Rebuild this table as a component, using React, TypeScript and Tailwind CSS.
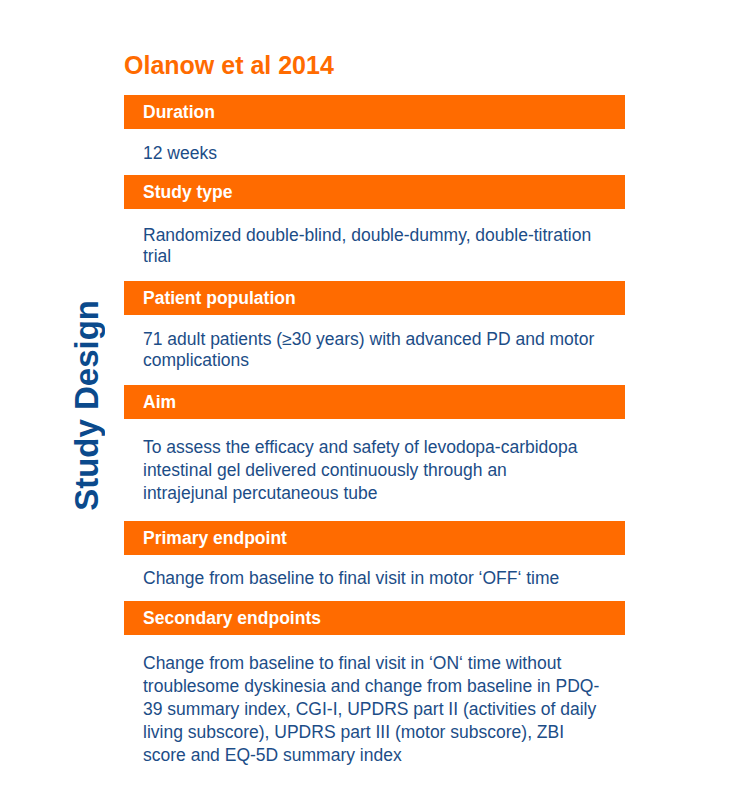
const sections = [
  { title: 'Duration', lines: ['12 weeks'], pad: 'pt-[13px] pb-[10px] leading-[23px]' },
  {
    title: 'Study type',
    lines: ['Randomized double-blind, double-dummy, double-titration', 'trial'],
    pad: 'pt-[16px] pb-[14px] leading-[21px]',
  },
  {
    title: 'Patient population',
    lines: ['71 adult patients (≥30 years) with advanced PD and motor', 'complications'],
    pad: 'pt-[14px] pb-[14px] leading-[21px]',
  },
  {
    title: 'Aim',
    lines: [
      'To assess the efficacy and safety of levodopa-carbidopa',
      'intestinal gel delivered continuously through an',
      'intrajejunal percutaneous tube',
    ],
    pad: 'pt-[17px] pb-[16px] leading-[23px]',
  },
  {
    title: 'Primary endpoint',
    lines: ['Change from baseline to final visit in motor ‘OFF‘ time'],
    pad: 'pt-[12px] pb-[11px] leading-[23px]',
  },
  {
    title: 'Secondary endpoints',
    lines: [
      'Change from baseline to final visit in ‘ON‘ time without',
      'troublesome dyskinesia and change from baseline in PDQ-',
      '39 summary index, CGI-I, UPDRS part II (activities of daily',
      'living subscore), UPDRS part III (motor subscore), ZBI',
      'score and EQ-5D summary index',
    ],
    pad: 'pt-[17px] pb-[16px] leading-[23px]',
  },
]

export default function App() {
  return (
    <div className="min-h-[809px] w-[730px] bg-white font-['Liberation_Sans',Arial,sans-serif]">
      <div className="flex pt-[51px]">
        {/* vertical label */}
        <div className="flex w-[124px] flex-col items-center justify-center pb-[24px] pl-[48px]">
          <h2 className="rotate-180 text-[33px] font-bold leading-none text-[#0b4a8c] [writing-mode:vertical-rl]">
            Study Design
          </h2>
        </div>

        <div className="w-[501px]">
          <h1 className="mb-[16px] text-[25px] font-bold leading-[28px] text-[#ff6b00]">
            Olanow et al 2014
          </h1>
          {sections.map((s) => (
            <div key={s.title}>
              <div className="flex h-[34px] items-center bg-[#ff6b00] px-[19px] text-[17.5px] font-bold text-white">
                {s.title}
              </div>
              <p className={`whitespace-nowrap px-[19px] text-[17.5px] text-[#1c4d87] ${s.pad}`}>
                {s.lines.map((l, i) => (
                  <span key={i} className="block">
                    {l}
                  </span>
                ))}
              </p>
            </div>
          ))}
        </div>
      </div>
    </div>
  )
}
